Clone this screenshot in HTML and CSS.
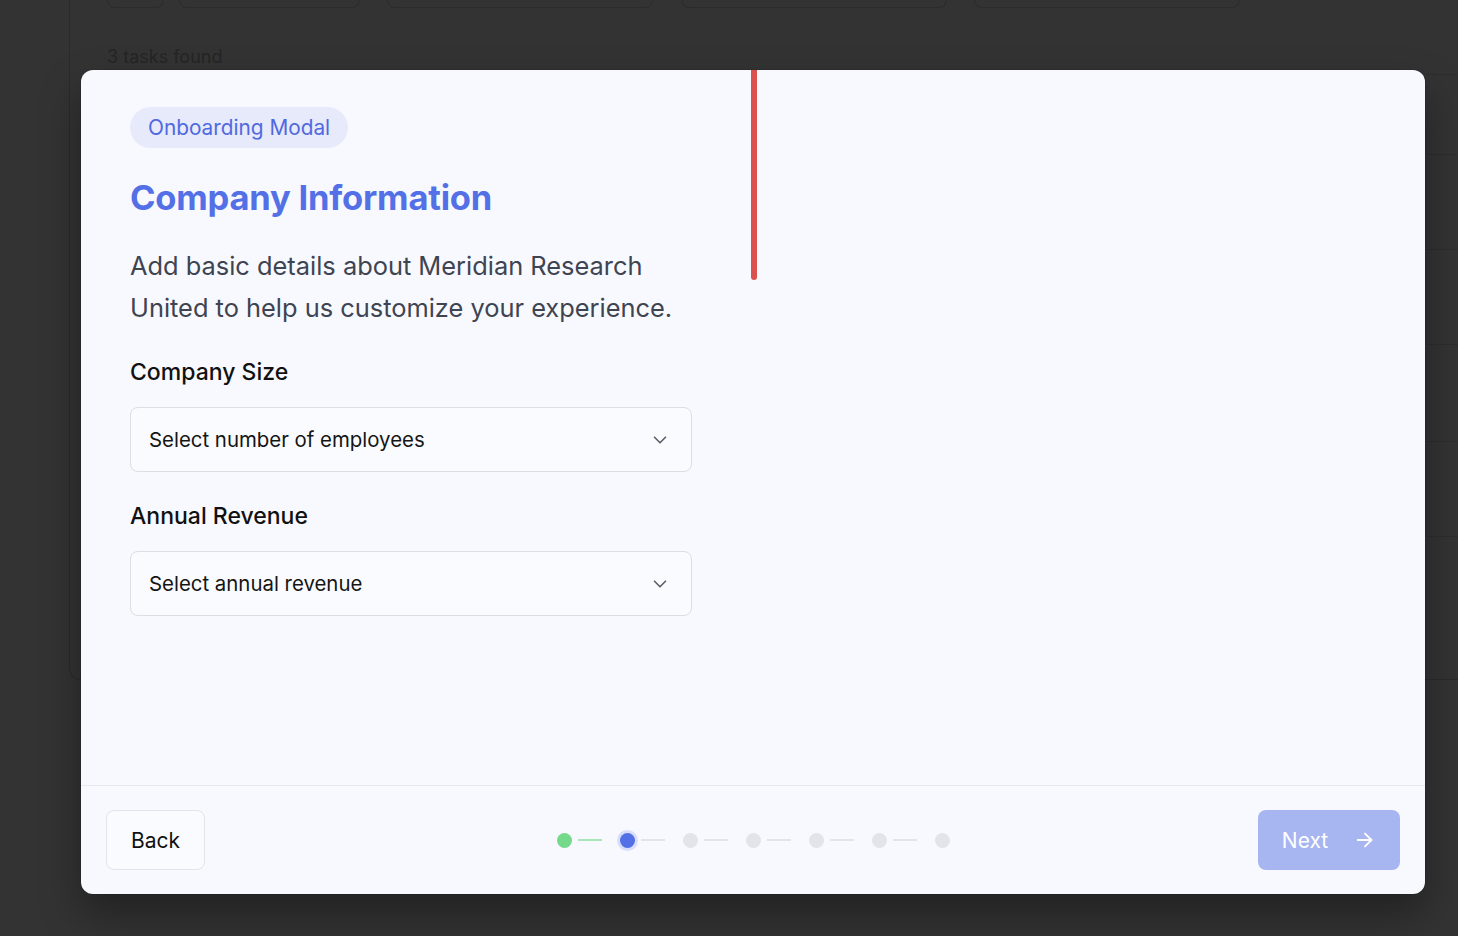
FILE: index.html
```html
<!DOCTYPE html>
<html lang="en">
<head>
<meta charset="utf-8">
<title>Onboarding</title>
<link rel="stylesheet" href="styles.css">
</head>
<body>
<div class="page">
  <div class="shell">
    <div class="stats">
      <div class="stat s1"></div>
      <div class="stat s2"></div>
      <div class="stat s3"></div>
      <div class="stat s4"></div>
      <div class="stat s5"></div>
    </div>
    <div class="found">3 tasks found</div>
    <div class="table">
      <div class="trow r1"></div>
      <div class="trow r2"></div>
      <div class="trow r3"></div>
      <div class="trow r4"></div>
      <div class="trow r5"></div>
      <div class="trow r6"></div>
    </div>
  </div>
</div>

<div class="modal">
  <div class="accent"></div>
  <div class="modal-body">
    <span class="badge">Onboarding Modal</span>
    <h1 class="title">Company Information</h1>
    <p class="desc">Add basic details about Meridian Research United to help us customize your experience.</p>
    <div class="field">
      <label class="label">Company Size</label>
      <div class="select">
        <span>Select number of employees</span>
        <svg class="chev" width="22" height="22" viewBox="0 0 24 24" fill="none" stroke="#5b5f6a" stroke-width="1.8" stroke-linecap="round" stroke-linejoin="round"><polyline points="6 9 12 15 18 9"/></svg>
      </div>
    </div>
    <div class="field">
      <label class="label">Annual Revenue</label>
      <div class="select">
        <span>Select annual revenue</span>
        <svg class="chev" width="22" height="22" viewBox="0 0 24 24" fill="none" stroke="#5b5f6a" stroke-width="1.8" stroke-linecap="round" stroke-linejoin="round"><polyline points="6 9 12 15 18 9"/></svg>
      </div>
    </div>
  </div>
  <div class="modal-footer">
    <button class="btn-back">Back</button>
    <div class="steps">
      <span class="dot done"></span><span class="line done"></span>
      <span class="dot active"></span><span class="line"></span>
      <span class="dot"></span><span class="line"></span>
      <span class="dot"></span><span class="line"></span>
      <span class="dot"></span><span class="line"></span>
      <span class="dot"></span><span class="line"></span>
      <span class="dot"></span>
    </div>
    <button class="btn-next">Next
      <svg width="22" height="22" viewBox="0 0 24 24" fill="none" stroke="#ffffff" stroke-width="2" stroke-linecap="round" stroke-linejoin="round"><line x1="4" y1="12" x2="19" y2="12"/><polyline points="12 5 19 12 12 19"/></svg>
    </button>
  </div>
</div>
</body>
</html>
```
FILE: styles.css
```css
* { box-sizing: border-box; }
html, body { margin: 0; padding: 0; }
body {
  background: #333333;
  font-family: Inter, "Noto Sans", "Liberation Sans", sans-serif;
  width: 1458px;
  height: 936px;
  overflow: hidden;
}
.page {
  padding-left: 69px;
  height: 936px;
}
.shell {
  height: 690px;
  margin-top: -10px;
  border-left: 1px solid #2b2b2b;
  border-bottom: 1px solid #2b2b2b;
  border-bottom-left-radius: 12px;
  padding-left: 37px;
}
.stats {
  display: flex;
  gap: 15px;
  height: 18px;
}
.stat {
  height: 18px;
  border: 1px solid #2c2c2c;
  border-top: none;
  border-radius: 0 0 8px 8px;
}
.s1 { width: 57px; }
.s2 { width: 181px; }
.s3 { width: 266px; margin-left: 12px; }
.s4 { width: 266px; margin-left: 13px; }
.s5 { width: 266px; margin-left: 12px; }
.found {
  margin-top: 38px;
  font-size: 18px;
  color: #252525;
  line-height: 22px;
}
.table {
  margin-top: 6px;
  margin-left: 1320px;
}
.trow { border-top: 1px solid #2d2d2d; }
.r1 { height: 80px; }
.r2 { height: 95px; }
.r3 { height: 95px; }
.r4 { height: 97px; }
.r5 { height: 95px; }
.r6 { height: 145px; }

/* modal */
.modal {
  position: absolute;
  left: 81px;
  top: 70px;
  width: 1344px;
  height: 824px;
  background: #f8f9fe;
  border-radius: 12px;
  box-shadow: 0 0 0 1px rgba(0,0,0,0.08), 0 20px 40px rgba(0,0,0,0.35);
  display: flex;
  flex-direction: column;
  overflow: hidden;
}
.accent {
  position: absolute;
  left: 670px;
  top: 0;
  width: 6px;
  height: 210px;
  background: #db524d;
  border-radius: 0 0 3px 3px;
}
.modal-body {
  flex: 1;
  padding: 37px 49px 0;
  display: flex;
  flex-direction: column;
  align-items: flex-start;
}
.badge {
  display: inline-block;
  background: #e7eafb;
  color: #5069e0;
  font-size: 20.8px;
  line-height: 42px;
  height: 41px;
  padding: 0 18px;
  border-radius: 21px;
}
.title {
  margin: 28px 0 0;
  font-size: 34.5px;
  font-weight: 700;
  line-height: 44px;
  color: #5370e6;
  letter-spacing: -0.2px;
}
.desc {
  margin: 25px 0 0;
  width: 562px;
  font-size: 25.4px;
  line-height: 42px;
  color: #3e4451;
}
.field {
  width: 562px;
  margin-top: 28px;
}
.field + .field { margin-top: 29px; }
.label {
  display: block;
  font-size: 23px;
  font-weight: 500;
  color: #111111;
  line-height: 30px;
}
.select {
  margin-top: 20px;
  height: 65px;
  border: 1px solid #dcdee5;
  border-radius: 8px;
  background: #fafbff;
  display: flex;
  align-items: center;
  justify-content: space-between;
  padding: 0 20px 0 18px;
  font-size: 20.4px;
  color: #151515;
}
.modal-footer {
  height: 109px;
  border-top: 1px solid #e6e8ef;
  display: flex;
  align-items: center;
  justify-content: space-between;
  padding: 0 25px;
  position: relative;
}
.btn-back {
  width: 99px;
  height: 60px;
  background: #fafbff;
  border: 1px solid #e3e5eb;
  border-radius: 8px;
  font-family: inherit;
  font-size: 21px;
  color: #111;
}
.steps {
  position: absolute;
  left: 0;
  right: 0;
  top: 0;
  bottom: 0;
  display: flex;
  align-items: center;
  justify-content: center;
  pointer-events: none;
}
.dot {
  width: 15px;
  height: 15px;
  border-radius: 50%;
  background: #e3e4ea;
}
.dot.done { background: #74d98a; }
.dot.active {
  background: #5370e6;
  box-shadow: 0 0 0 3px #d9defa;
}
.line {
  width: 24px;
  height: 2px;
  margin: 0 18px 0 6px;
  background: #e3e4ea;
}
.line.done { background: #a9e7b7; }
.btn-next {
  width: 142px;
  height: 60px;
  border: none;
  border-radius: 8px;
  background: #a7b5f0;
  color: #ffffff;
  font-family: inherit;
  font-size: 21px;
  display: flex;
  align-items: center;
  justify-content: center;
  gap: 26px;
  padding-left: 6px;
}
```
